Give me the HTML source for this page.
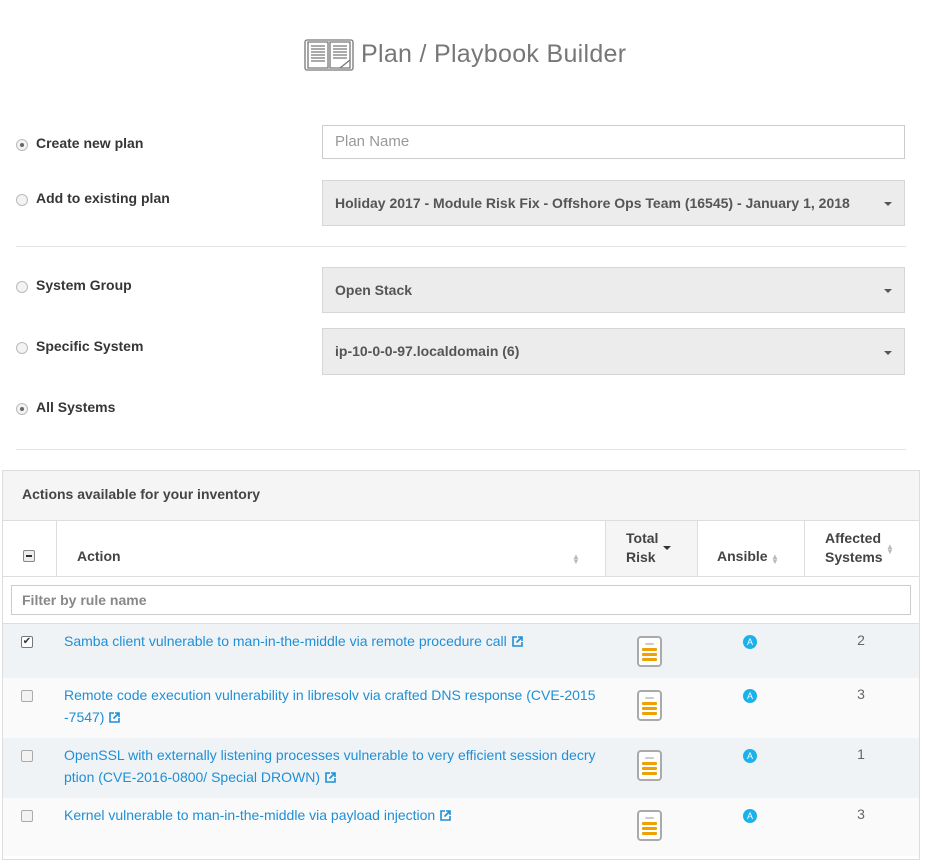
<!DOCTYPE html>
<html><head><style>
body{margin:0;width:930px;height:856px;overflow:hidden;background:#fff;font-family:"Liberation Sans",sans-serif;font-size:14px;color:#333;position:relative}
.a{position:absolute}
.radio{position:absolute;left:16px;width:10px;height:10px;border:1px solid #bbb;border-radius:50%;background:#f3f3f3}
.radio.on:after{content:"";position:absolute;left:3px;top:3px;width:4px;height:4px;border-radius:50%;background:#666}
.lbl{position:absolute;left:36px;font-weight:bold;font-size:14px;color:#363636}
.sel{position:absolute;left:322px;width:583px;background:#ececec;border:1px solid #d6d6d6;font-weight:bold;font-size:14px;color:#555;box-sizing:border-box;padding-left:12px}
.sel:after{content:"";position:absolute;right:12px;top:50%;margin-top:-1px;border:4px solid transparent;border-top-color:#555;border-bottom:0}
.hr{position:absolute;left:16px;width:890px;height:1px;background:#e5e5e5}
.row{position:absolute;left:3px;width:916px}
.cb{position:absolute;left:21px;width:10px;height:10px;border:1px solid #aaa;border-radius:2px;background:#f2f2f2}
.link{position:absolute;left:64px;width:532px;color:#1f8fd6;font-size:14px;line-height:22px;word-break:break-all}
.risk{position:absolute;left:637px;width:25px;height:31px;border:2px solid #aaa;border-radius:4px;box-sizing:border-box;background:#fff}
.risk i{position:absolute;left:3px;width:15px;height:3px;background:#f0a000;border-radius:1px}
.ans{position:absolute;left:743px;width:14px;height:14px;border-radius:50%;background:#1ab2ea;color:#fff;font-size:9px;text-align:center;line-height:14px}
.num{position:absolute;left:850px;width:22px;text-align:center;color:#666;font-size:14px}
.ext{display:inline-block;margin-left:5px;vertical-align:-1px}
.srt{color:#bbb;font-size:8px;line-height:5px}
</style></head><body>
<svg class="a" style="left:304px;top:38px" width="50" height="34" viewBox="0 0 50 34" fill="none" stroke="#777" stroke-width="1.3"><rect x="1" y="2" width="48" height="30" rx="2"/><path d="M4 4h20v26H4zM26 4h20v26H26z"/><path d="M7 8h14M7 11h14M7 14h14M7 17h14M7 20h14M7 23h14M29 8h14M29 11h14M29 14h14M29 17h14M29 20h14M36 30l10-8"/></svg>
<div class="a" style="left:361px;top:40px;font-size:25px;color:#777;letter-spacing:0.3px">Plan / Playbook Builder</div>

<div class="radio on" style="top:139px"></div><div class="lbl" style="top:135px">Create new plan</div>
<div class="a" style="left:322px;top:125px;width:583px;height:34px;border:1px solid #ccc;box-sizing:border-box;padding:7px 12px;color:#999;font-size:15px">Plan Name</div>
<div class="radio" style="top:194px"></div><div class="lbl" style="top:190px">Add to existing plan</div>
<div class="sel" style="top:180px;height:46px;line-height:44px">Holiday 2017 - Module Risk Fix - Offshore Ops Team (16545) - January 1, 2018</div>
<div class="hr" style="top:246px"></div>
<div class="radio" style="top:281px"></div><div class="lbl" style="top:277px">System Group</div>
<div class="sel" style="top:267px;height:46px;line-height:44px">Open Stack</div>
<div class="radio" style="top:342px"></div><div class="lbl" style="top:338px">Specific System</div>
<div class="sel" style="top:328px;height:47px;line-height:45px">ip-10-0-0-97.localdomain (6)</div>
<div class="radio on" style="top:403px"></div><div class="lbl" style="top:399px">All Systems</div>
<div class="hr" style="top:449px"></div>

<div class="a" style="left:2px;top:470px;width:918px;height:390px;border:1px solid #ddd;box-sizing:border-box"></div>
<div class="a" style="left:3px;top:471px;width:916px;height:49px;background:#f5f5f5;border-bottom:1px solid #ddd"></div>
<div class="a" style="left:22px;top:486px;font-size:14px;font-weight:bold;color:#444">Actions available for your inventory</div>
<div class="a" style="left:3px;top:521px;width:916px;height:55px;border-bottom:1px solid #ddd"></div>
<div class="a" style="left:56px;top:521px;width:1px;height:55px;background:#ddd"></div>
<div class="a" style="left:605px;top:521px;width:91px;height:55px;background:#f5f5f5;border-left:1px solid #ddd;border-right:1px solid #ddd"></div>
<div class="a" style="left:804px;top:521px;width:1px;height:55px;background:#ddd"></div>
<div class="a" style="left:23px;top:550px;width:10px;height:10px;border:1px solid #888;border-radius:2px;background:#eee"><div style="margin:4px 2px;height:2px;background:#333"></div></div>
<div class="a" style="left:77px;top:548px;font-weight:bold;color:#444">Action</div>
<div class="a srt" style="left:572px;top:554px">▲<br>▼</div>
<div class="a" style="left:626px;top:529px;font-weight:bold;color:#444;line-height:19px">Total<br>Risk</div>
<div class="a" style="left:663px;top:546px;border:4px solid transparent;border-top-color:#333"></div>
<div class="a" style="left:717px;top:548px;font-weight:bold;color:#444">Ansible</div>
<div class="a srt" style="left:771px;top:554px">▲<br>▼</div>
<div class="a" style="left:825px;top:529px;font-weight:bold;color:#444;line-height:19px">Affected<br>Systems</div>
<div class="a srt" style="left:886px;top:544px">▲<br>▼</div>
<div class="a" style="left:11px;top:585px;width:900px;height:30px;border:1px solid #ccc;box-sizing:border-box;padding:6px 10px;color:#888;font-weight:bold">Filter by rule name</div>
<div class="a" style="left:3px;top:623px;width:916px;height:1px;background:#ddd"></div>

<div class="row" style="top:624px;height:54px;background:#f0f3f6"></div>
<div class="cb" style="top:636px;background:#fff;border-color:#777;font-size:10px;line-height:10px;text-align:center">✔</div>
<div class="link" style="top:630px">Samba client vulnerable to man-in-the-middle via remote procedure call<svg class="ext" width="11" height="11" viewBox="0 0 11 11" fill="none" stroke="#1f8fd6" stroke-width="1.6"><path d="M5 1H1v9h9V6M6 1h4v4M10 1L4.5 6.5"/></svg></div>
<div class="risk" style="top:636px"><i style="top:5px;background:#ccc;left:6px;width:9px;height:2px"></i><i style="top:10px"></i><i style="top:15px"></i><i style="top:20px"></i></div>
<div class="ans" style="top:635px">A</div><div class="num" style="top:632px">2</div>

<div class="row" style="top:678px;height:60px;background:#fafafa"></div>
<div class="cb" style="top:690px"></div>
<div class="link" style="top:684px">Remote code execution vulnerability in libresolv via crafted DNS response (CVE-2015-7547)<svg class="ext" width="11" height="11" viewBox="0 0 11 11" fill="none" stroke="#1f8fd6" stroke-width="1.6"><path d="M5 1H1v9h9V6M6 1h4v4M10 1L4.5 6.5"/></svg></div>
<div class="risk" style="top:690px"><i style="top:5px;background:#ccc;left:6px;width:9px;height:2px"></i><i style="top:10px"></i><i style="top:15px"></i><i style="top:20px"></i></div>
<div class="ans" style="top:689px">A</div><div class="num" style="top:686px">3</div>

<div class="row" style="top:738px;height:60px;background:#f0f3f6"></div>
<div class="cb" style="top:750px"></div>
<div class="link" style="top:744px">OpenSSL with externally listening processes vulnerable to very efficient session decryption (CVE-2016-0800/ Special DROWN)<svg class="ext" width="11" height="11" viewBox="0 0 11 11" fill="none" stroke="#1f8fd6" stroke-width="1.6"><path d="M5 1H1v9h9V6M6 1h4v4M10 1L4.5 6.5"/></svg></div>
<div class="risk" style="top:750px"><i style="top:5px;background:#ccc;left:6px;width:9px;height:2px"></i><i style="top:10px"></i><i style="top:15px"></i><i style="top:20px"></i></div>
<div class="ans" style="top:749px">A</div><div class="num" style="top:746px">1</div>

<div class="row" style="top:798px;height:58px;background:#fafafa"></div>
<div class="cb" style="top:810px"></div>
<div class="link" style="top:804px">Kernel vulnerable to man-in-the-middle via payload injection<svg class="ext" width="11" height="11" viewBox="0 0 11 11" fill="none" stroke="#1f8fd6" stroke-width="1.6"><path d="M5 1H1v9h9V6M6 1h4v4M10 1L4.5 6.5"/></svg></div>
<div class="risk" style="top:810px"><i style="top:5px;background:#ccc;left:6px;width:9px;height:2px"></i><i style="top:10px"></i><i style="top:15px"></i><i style="top:20px"></i></div>
<div class="ans" style="top:809px">A</div><div class="num" style="top:806px">3</div>
</body></html>
